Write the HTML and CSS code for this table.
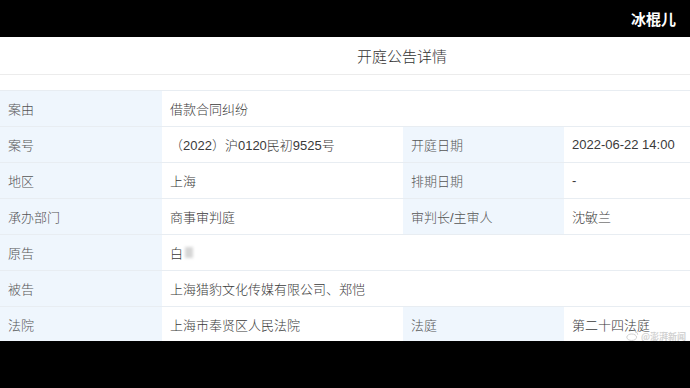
FILE: index.html
```html
<!DOCTYPE html>
<html lang="zh">
<head>
<meta charset="utf-8">
<link rel="stylesheet" href="styles.css">
</head>
<body>
<div class="topbar"><span class="brand">冰棍儿</span></div>
<div class="page">
  <div class="title"><span>开庭公告详情</span></div>
  <div class="gap"></div>
  <div class="table">
    <div class="lbl">案由</div><div class="val wide">借款合同纠纷</div>
    <div class="lbl">案号</div><div class="val">（2022）沪0120民初9525号</div><div class="lbl">开庭日期</div><div class="val">2022-06-22 14:00</div>
    <div class="lbl">地区</div><div class="val">上海</div><div class="lbl">排期日期</div><div class="val">-</div>
    <div class="lbl">承办部门</div><div class="val">商事审判庭</div><div class="lbl">审判长/主审人</div><div class="val">沈敏兰</div>
    <div class="lbl">原告</div><div class="val wide">白<span class="blur"></span></div>
    <div class="lbl">被告</div><div class="val wide">上海猎豹文化传媒有限公司、郑恺</div>
    <div class="lbl">法院</div><div class="val">上海市奉贤区人民法院</div><div class="lbl">法庭</div><div class="val">第二十四法庭</div>
  </div>
  <div class="watermark">
    <svg width="13" height="10" viewBox="0 0 16 12"><ellipse cx="7" cy="7.5" rx="6" ry="4" fill="none" stroke="#cfcfcf" stroke-width="1.2"/><path d="M11 1 a3.5 3.5 0 0 1 3.5 3.5" fill="none" stroke="#cfcfcf" stroke-width="1.2"/></svg>
    <span>@澎湃新闻</span>
  </div>
</div>
<div class="bottom"></div>
</body>
</html>
```
FILE: styles.css
```css
html, body {
  margin: 0;
  padding: 0;
  background: #000;
  font-family: "Noto Sans CJK SC", "Liberation Sans", sans-serif;
}
.topbar {
  height: 37px;
  display: flex;
  justify-content: flex-end;
  align-items: center;
  padding-right: 14px;
}
.brand {
  color: #fff;
  font-weight: 700;
  font-size: 15px;
  margin-top: -1px;
}
.page {
  background: #fff;
  height: 304px;
  overflow: hidden;
  position: relative;
}
.title {
  height: 37px;
  border-bottom: 1px solid #ececec;
  display: flex;
  align-items: center;
  justify-content: center;
  padding-left: 114px;
  font-size: 15px;
  font-weight: 300;
  color: #333;
}
.gap {
  height: 15px;
}
.table {
  display: grid;
  grid-template-columns: 162px 241px 161px 1fr;
  grid-auto-rows: 36px;
  border-top: 1px solid #e8edf2;
  font-family: "Liberation Sans", "Noto Sans CJK SC", sans-serif;
  font-size: 13px;
  font-weight: 300;
}
.lbl, .val {
  display: flex;
  align-items: center;
  border-bottom: 1px solid #e8edf2;
  box-sizing: border-box;
  padding-left: 8px;
  white-space: nowrap;
}
.lbl {
  background: #eff6fd;
  color: #555;
}
.val {
  color: #3a3a3a;
}
.val.wide {
  grid-column: span 3;
}
.blur {
  display: inline-block;
  width: 8px;
  height: 11px;
  margin-left: 2px;
  background: #d6d6d6;
  filter: blur(1.5px);
}
.watermark {
  position: absolute;
  right: 4px;
  bottom: 0;
  display: flex;
  align-items: center;
  gap: 2px;
  color: #d2d2d2;
  font-size: 9px;
  line-height: 9px;
  font-weight: 700;
}
.bottom {
  height: 47px;
}
```
